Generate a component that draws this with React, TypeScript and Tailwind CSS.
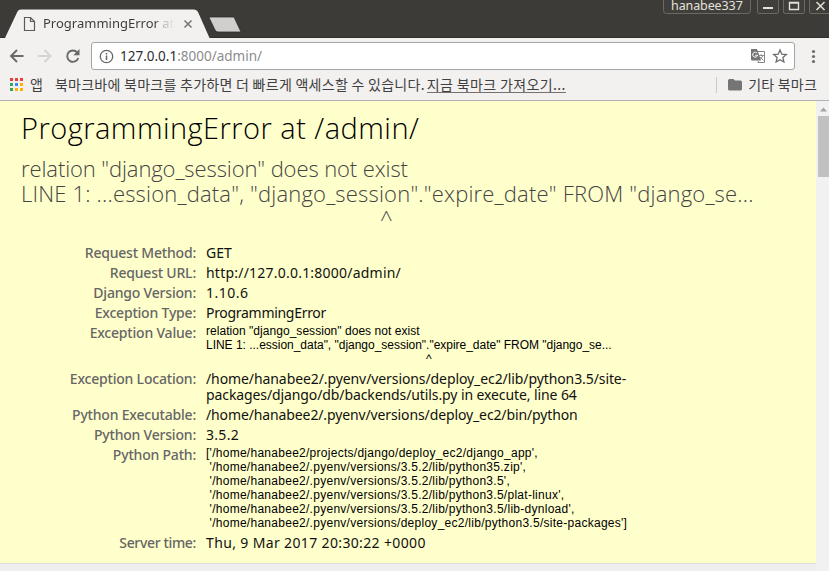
import type { ReactNode } from 'react';

function TabStrip() {
  return (
    <div className="relative h-[38px] shrink-0 bg-[#3c3b37]">
      <svg className="absolute left-0 top-0" width="829" height="38" viewBox="0 0 829 38">
        <path d="M5 38 L17.5 11.5 Q18.5 9.5 21 9.5 H194 Q197 9.5 198 12 L209.500 38 Z" fill="#f2f1f0" />
        <path d="M210.500 17 H234 L241 32 H218 Q216 32 215 30 L209.500 18.500 Q209 17 210.500 17 Z" fill="#d0cfcd" stroke="#2d2c29" strokeWidth="0.8" />
        <path d="M24.500 17.500 H30.500 L34.500 21.500 V30.500 H24.500 Z M30.500 17.500 V21.500 H34.500" fill="none" stroke="#5a5a5a" strokeWidth="1.2" />
        <path d="M184.500 20.500 L191.500 27.500 M191.500 20.500 L184.500 27.500" stroke="#76736e" strokeWidth="1.5" />
        <path d="M0 37.500 H5 M210 37.500 H829" stroke="#302f2c" />
        <g fill="#403f3b" stroke="#6b6964">
          <path d="M663.500 -2 V10.500 Q663.500 13.500 666.500 13.500 H747 Q750.500 13.500 750.500 10.500 V-2" />
          <path d="M757.500 -2 V12 Q757.500 13.500 759 13.500 H777 Q778.500 13.500 778.500 12 V-2" />
          <path d="M783.500 -2 V12 Q783.500 13.500 785 13.500 H803 Q804.500 13.500 804.500 12 V-2" />
          <path d="M809.500 -2 V12 Q809.500 13.500 811 13.500 H830" />
        </g>
        <path d="M763 8 H773" stroke="#e4e1db" strokeWidth="2" />
        <path d="M789.500 2.500 H798.500 V9.500 H789.500 Z M789 3 H799" fill="none" stroke="#e4e1db" strokeWidth="1.4" />
        <path d="M816.500 2 L824.500 10 M824.500 2 L816.500 10" stroke="#e4e1db" strokeWidth="1.5" />
      </svg>
      <div className="absolute left-[43px] top-[15px] h-5 w-[132px] overflow-hidden whitespace-nowrap bg-linear-to-r from-[#3a3a3a] from-[85%] via-[#b0b0b0] via-[91%] to-[#f2f1f0] bg-clip-text font-['Noto_Sans',sans-serif] text-[13px] leading-[17px] text-transparent">
        ProgrammingError at
      </div>
      <div className="absolute left-[671px] top-0 font-['Noto_Sans',sans-serif] text-[12.5px] leading-3 tracking-[-0.1px] text-[#e4e1db]">
        hanabee337
      </div>
    </div>
  );
}

function Toolbar() {
  return (
    <div className="flex h-[36px] shrink-0 items-end bg-[#f2f1f0]">
      <svg className="shrink-0" width="91" height="36" viewBox="0 38 91 36" fill="none">
        <path d="M23.500 56 H11.500 M17 50 L11 56 L17 62" stroke="#696969" strokeWidth="1.9" />
        <path d="M38 56 H50 M44.500 50 L50.500 56 L44.500 62" stroke="#d4d3d2" strokeWidth="1.9" />
        <path d="M77.300 52.500 A5.700 5.700 0 1 0 78.300 58" stroke="#696969" strokeWidth="1.9" />
        <path d="M79.500 49 V55.200 H73.300 Z" fill="#696969" />
      </svg>
      <div className="mb-1 flex h-[28px] w-[704px] shrink-0 items-center rounded-[3px] border border-[#a3a5a3] bg-white pl-[7px] pr-[6px]">
        <svg width="15" height="15" viewBox="0 0 15 15" fill="none" stroke="#666">
          <circle cx="7.500" cy="7.500" r="6.200" strokeWidth="1.3" />
          <path d="M7.500 6.500 V11 M7.500 4 V5.500" strokeWidth="1.5" />
        </svg>
        <span className="ml-[6px] font-['Noto_Sans',sans-serif] text-[13.5px] leading-4 text-[#2e2e2e]">
          127.0.0.1<span className="text-[#8c8c8c]">:8000/admin/</span>
        </span>
        <svg className="ml-auto" width="38" height="16" viewBox="750 48 38 16" fill="none">
          <path d="M757 51.500 H764.500 V62.500 H757.500" fill="#fff" stroke="#858585" />
          <path d="M751 49 H757 L761 60.500 H752 Q751 60.500 751 59 Z" fill="#757575" />
          <path d="M757.200 53.200 A2.500 2.500 0 1 0 757.600 55.300 H755.200" stroke="#fff" strokeWidth="1" />
          <path d="M758.500 55.500 H764 M761.200 54 V55.500 M762.800 55.500 Q762 58.500 759.500 60 M760 57 L763.500 60.500 M758 61 L759.500 63" stroke="#858585" strokeWidth="0.9" />
          <path d="M780 50 L781.800 54.200 L786.300 54.600 L782.900 57.600 L783.900 62 L780 59.700 L776.100 62 L777.100 57.600 L773.700 54.600 L778.200 54.200 Z" stroke="#6c6c6c" strokeWidth="1.3" />
        </svg>
      </div>
      <svg className="ml-auto shrink-0" width="34" height="36" viewBox="795 38 34 36" fill="#6c6c6c">
        <circle cx="813.500" cy="51.500" r="1.600" />
        <circle cx="813.500" cy="56.500" r="1.600" />
        <circle cx="813.500" cy="61.500" r="1.600" />
      </svg>
    </div>
  );
}

const dots = [
  '#ea4335', '#ea4335', '#ea4335',
  '#34a853', '#4285f4', '#fbb300',
  '#34a853', '#fbb300', '#fbb300',
];

function BookmarkBar() {
  return (
    <div className="flex h-[27px] shrink-0 items-start whitespace-nowrap border-b border-[#b3b1b2] bg-[#f2f1f0] pl-[10px] pr-3 pt-px font-['Noto_Sans_CJK_KR',sans-serif] text-[14px] leading-[18px] text-[#3f3f3f]">
      <div className="mt-[3px] grid grid-cols-3 gap-[2px]">
        {dots.map((color, i) => (
          <i key={i} className="size-[3px]" style={{ backgroundColor: color }} />
        ))}
      </div>
      <span className="ml-[7px]">앱</span>
      <span className="ml-[12px] tracking-[0.27px]">북마크바에 북마크를 추가하면 더 빠르게 액세스할 수 있습니다.</span>
      <span className="ml-[2px] h-[18px] border-b border-[#77706d] leading-[18px] tracking-[0.37px]">지금 북마크 가져오기...</span>
      <i className="ml-auto mt-[2px] h-4 w-px bg-[#cbc9c7]" />
      <svg className="ml-[11px] mt-[3px]" width="14" height="13" viewBox="0 0 14 13" fill="#757575">
        <path d="M1.500 1 H5.500 L7 2.500 H12.500 Q14 2.500 14 4 V11 Q14 12.500 12.500 12.500 H1.500 Q0 12.500 0 11 V2.500 Q0 1 1.500 1 Z" />
      </svg>
      <span className="ml-[6px] tracking-[0.2px]">기타 북마크</span>
    </div>
  );
}

function Row({ label, tracking = 'tracking-[-0.2px]', children }: { label: string; tracking?: string; children: ReactNode }) {
  return (
    <div className="flex py-[2px] leading-4">
      <div className={`w-[196px] shrink-0 text-right font-medium text-[#666] ${tracking}`}>{label}</div>
      <div className="pl-[10px] text-[#111]">{children}</div>
    </div>
  );
}

const pre = "-mt-px mb-px font-['Liberation_Sans',sans-serif] text-[12px] leading-[14px] whitespace-pre text-black";

function ErrorPage() {
  return (
    <div className="h-[463px] border-b border-[#ddd] bg-[#ffffcc] font-['Noto_Sans',sans-serif] text-[14px]">
      <h1 className="pl-[21px] pt-[10px] font-['Open_Sans',sans-serif] text-[29px] font-light leading-[34px] tracking-[0.47px] text-black">
        ProgrammingError at /admin/
      </h1>
      <div className="mt-[11px] h-[87px] whitespace-pre pl-[21px] font-['Open_Sans',sans-serif] text-[22px] font-light leading-[25px] text-[#444]">
        <div className="tracking-[-0.1px]">relation "django_session" does not exist</div>
        <div className="tracking-[0.19px]">LINE 1: ...ession_data", "django_session"."expire_date" FROM "django_se...</div>
        <div className="pl-[359px]">^</div>
      </div>
      <Row label="Request Method:">GET</Row>
      <Row label="Request URL:"><span className="tracking-[0.22px]">http://127.0.0.1:8000/admin/</span></Row>
      <Row label="Django Version:"><span className="tracking-[0.5px]">1.10.6</span></Row>
      <Row label="Exception Type:"><span className="tracking-[-0.3px]">ProgrammingError</span></Row>
      <Row label="Exception Value:">
        <div className={pre}>
          <div className="tracking-[0.04px]">relation "django_session" does not exist</div>
          <div className="tracking-[-0.02px]">LINE 1: ...ession_data", "django_session"."expire_date" FROM "django_se...</div>
          <div className="pl-[220px]">^</div>
        </div>
      </Row>
      <Row label="Exception Location:">
        <div className="tracking-[-0.09px]">/home/hanabee2/.pyenv/versions/deploy_ec2/lib/python3.5/site-</div>
        <div className="tracking-[-0.1px]">packages/django/db/backends/utils.py in execute, line 64</div>
      </Row>
      <Row label="Python Executable:"><span className="tracking-[-0.12px]">/home/hanabee2/.pyenv/versions/deploy_ec2/bin/python</span></Row>
      <Row label="Python Version:"><span className="tracking-[0.3px]">3.5.2</span></Row>
      <Row label="Python Path:">
        <div className={`${pre} tracking-[0.27px]`}>
          {`['/home/hanabee2/projects/django/deploy_ec2/django_app',
 '/home/hanabee2/.pyenv/versions/3.5.2/lib/python35.zip',
 '/home/hanabee2/.pyenv/versions/3.5.2/lib/python3.5',
 '/home/hanabee2/.pyenv/versions/3.5.2/lib/python3.5/plat-linux',
 '/home/hanabee2/.pyenv/versions/3.5.2/lib/python3.5/lib-dynload',
 '/home/hanabee2/.pyenv/versions/deploy_ec2/lib/python3.5/site-packages']`}
        </div>
      </Row>
      <Row label="Server time:" tracking="tracking-[-0.35px]"><span className="tracking-[0.36px]">Thu, 9 Mar 2017 20:30:22 +0000</span></Row>
    </div>
  );
}

export default function App() {
  return (
    <div className="flex h-[571px] w-[829px] flex-col overflow-hidden">
      <TabStrip />
      <Toolbar />
      <BookmarkBar />
      <div className="flex min-h-0 flex-1">
        <div className="w-[816px] shrink-0 bg-[#eee]">
          <ErrorPage />
        </div>
        <div className="flex flex-1 flex-col bg-[#f1f1f1] pl-[2px] pt-[6px]">
          <svg width="11" height="9" viewBox="0 0 11 9" fill="#a3a3a3">
            <path d="M2 4.500 L5.500 0.500 L9 4.500 Z" />
          </svg>
          <div className="h-[61px] bg-[#c1c1c1]" />
        </div>
      </div>
    </div>
  );
}
